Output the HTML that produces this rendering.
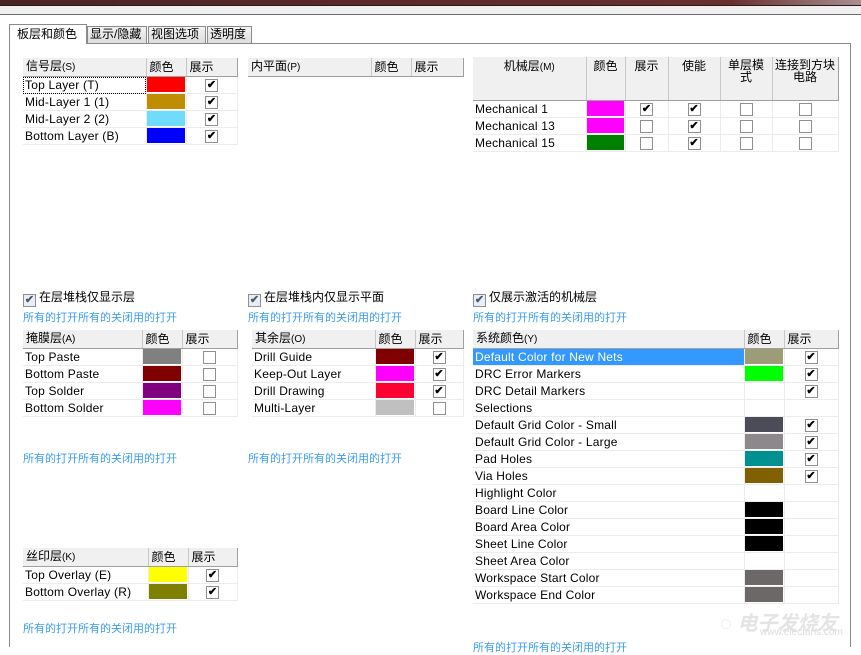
<!DOCTYPE html>
<html><head><meta charset="utf-8">
<style>
*{margin:0;padding:0;box-sizing:border-box}
body{width:861px;height:647px;overflow:hidden;background:#fff;position:relative;font-family:"Liberation Sans","Noto Sans CJK SC",sans-serif;font-size:12px;color:#000}
.a{position:absolute}
table{position:absolute;border-collapse:collapse;table-layout:fixed}
td{height:17px;border-right:1px solid #ececec;border-bottom:1px solid #ececec;padding:0 2px;white-space:nowrap;overflow:hidden;line-height:16px;font-size:12px;letter-spacing:0.2px}
th{height:17px;background:#f0f0f0;border-right:1px solid #c8c8c8;border-bottom:1px solid #a0a0a0;font-weight:normal;text-align:left;padding:0 3px;line-height:16px;font-size:12px;white-space:nowrap}
th:last-child{border-right:1px solid #a0a0a0}
td.c{padding:0;position:relative}
td.c div{position:absolute;left:0;right:1px;top:0;bottom:1px}
td.k{text-align:center;padding:0}
.cb{display:inline-block;width:13px;height:13px;border:1px solid #8f8f8f;background:#fff;vertical-align:middle;font-size:11px;line-height:11px;text-align:center;font-weight:bold;letter-spacing:0}
.sel td:first-child{background:#3399ff;color:#fff}
.lnk{position:absolute;color:#3c9cf0;font-size:11px}
.chk{position:absolute;font-size:12px}
.chk .cb{background:#e8eef8;border-color:#8f8f8f;color:#556;margin-right:3px;vertical-align:-2px}
.tab{position:absolute;top:26px;height:17px;border:1px solid #8a8a8a;border-bottom:none;background:linear-gradient(#f4f4f4,#dcdcdc);font-size:12px;line-height:15px;padding:0 2px}
</style></head><body>
<div class="a" style="left:0;top:0;width:861px;height:5px;background:linear-gradient(90deg,#4a2424,#5e2a2a 50%,#6a3030 85%,#a89090)"></div>
<div class="a" style="left:0;top:5px;width:861px;height:1px;background:#2a1a14"></div>
<div class="a" style="left:0;top:6px;width:861px;height:8px;background:#f0f0f0"></div>
<div class="a" style="left:0;top:14px;width:861px;height:1px;background:#6a6a6a"></div>

<div class="a" style="left:9px;top:43px;width:842px;height:1px;background:#8a8a8a"></div>
<div class="a" style="left:9px;top:43px;width:1px;height:604px;background:#8a8a8a"></div>
<div class="a" style="left:850px;top:43px;width:1px;height:604px;background:#8a8a8a"></div>
<div class="tab" style="left:9px;top:24px;height:20px;width:78px;background:#fff;line-height:19px;padding-left:7px">板层和颜色</div>
<div class="tab" style="left:87px;width:60px">显示/隐藏</div>
<div class="tab" style="left:148px;width:58px">视图选项</div>
<div class="tab" style="left:207px;width:45px">透明度</div>

<table style="left:23px;top:58px;width:214px">
<colgroup><col style="width:123px"><col style="width:40px"><col style="width:51px"></colgroup>
<tr><th>信号层<span style="font-size:10px">(S)</span></th><th>颜色</th><th>展示</th></tr>
<tr><td style="outline:1px dotted #000;outline-offset:-1px">Top Layer (T)</td><td class="c"><div style="background:#f00"></div></td><td class="k"><span class="cb">✔</span></td></tr>
<tr><td>Mid-Layer 1 (1)</td><td class="c"><div style="background:#c08c00"></div></td><td class="k"><span class="cb">✔</span></td></tr>
<tr><td>Mid-Layer 2 (2)</td><td class="c"><div style="background:#70dcfc"></div></td><td class="k"><span class="cb">✔</span></td></tr>
<tr><td>Bottom Layer (B)</td><td class="c"><div style="background:#00f"></div></td><td class="k"><span class="cb">✔</span></td></tr>
</table>

<table style="left:248px;top:58px;width:215px">
<colgroup><col style="width:123px"><col style="width:40px"><col style="width:52px"></colgroup>
<tr><th>内平面<span style="font-size:10px">(P)</span></th><th>颜色</th><th>展示</th></tr>
</table>

<table style="left:473px;top:57px;width:365px">
<colgroup><col style="width:113px"><col style="width:39px"><col style="width:43px"><col style="width:52px"><col style="width:52px"><col style="width:66px"></colgroup>
<tr><th style="height:43px;vertical-align:top;text-align:center;line-height:14px;padding-top:2px">机械层<span style="font-size:10px">(M)</span></th><th style="vertical-align:top;text-align:center;line-height:14px;padding-top:2px">颜色</th><th style="vertical-align:top;text-align:center;line-height:14px;padding-top:2px">展示</th><th style="vertical-align:top;text-align:center;line-height:14px;padding-top:2px">使能</th><th style="vertical-align:top;text-align:center;line-height:12px;padding-top:2px;white-space:normal">单层模式</th><th style="vertical-align:top;text-align:center;line-height:12px;padding-top:2px;white-space:normal;padding:2px 1px 0">连接到方块电路</th></tr>
<tr><td>Mechanical 1</td><td class="c"><div style="background:#f0f"></div></td><td class="k"><span class="cb">✔</span></td><td class="k"><span class="cb">✔</span></td><td class="k"><span class="cb"></span></td><td class="k"><span class="cb"></span></td></tr>
<tr><td>Mechanical 13</td><td class="c"><div style="background:#f0f"></div></td><td class="k"><span class="cb"></span></td><td class="k"><span class="cb">✔</span></td><td class="k"><span class="cb"></span></td><td class="k"><span class="cb"></span></td></tr>
<tr><td>Mechanical 15</td><td class="c"><div style="background:#008000"></div></td><td class="k"><span class="cb"></span></td><td class="k"><span class="cb">✔</span></td><td class="k"><span class="cb"></span></td><td class="k"><span class="cb"></span></td></tr>
</table>

<div class="chk" style="left:23px;top:288px"><span class="cb">✔</span>在层堆栈仅显示层</div>
<div class="chk" style="left:248px;top:288px"><span class="cb">✔</span>在层堆栈内仅显示平面</div>
<div class="chk" style="left:473px;top:288px"><span class="cb">✔</span>仅展示激活的机械层</div>
<div class="lnk" style="left:23px;top:309px">所有的打开所有的关闭用的打开</div>
<div class="lnk" style="left:248px;top:309px">所有的打开所有的关闭用的打开</div>
<div class="lnk" style="left:473px;top:309px">所有的打开所有的关闭用的打开</div>

<table style="left:23px;top:330px;width:214px">
<colgroup><col style="width:119px"><col style="width:40px"><col style="width:55px"></colgroup>
<tr><th>掩膜层<span style="font-size:10px">(A)</span></th><th>颜色</th><th>展示</th></tr>
<tr><td>Top Paste</td><td class="c"><div style="background:#808080"></div></td><td class="k"><span class="cb"></span></td></tr>
<tr><td>Bottom Paste</td><td class="c"><div style="background:#800000"></div></td><td class="k"><span class="cb"></span></td></tr>
<tr><td>Top Solder</td><td class="c"><div style="background:#800080"></div></td><td class="k"><span class="cb"></span></td></tr>
<tr><td>Bottom Solder</td><td class="c"><div style="background:#f0f"></div></td><td class="k"><span class="cb"></span></td></tr>
</table>

<table style="left:252px;top:330px;width:211px">
<colgroup><col style="width:123px"><col style="width:40px"><col style="width:48px"></colgroup>
<tr><th>其余层<span style="font-size:10px">(O)</span></th><th>颜色</th><th>展示</th></tr>
<tr><td>Drill Guide</td><td class="c"><div style="background:#800000"></div></td><td class="k"><span class="cb">✔</span></td></tr>
<tr><td>Keep-Out Layer</td><td class="c"><div style="background:#f0f"></div></td><td class="k"><span class="cb">✔</span></td></tr>
<tr><td>Drill Drawing</td><td class="c"><div style="background:#ff0030"></div></td><td class="k"><span class="cb">✔</span></td></tr>
<tr><td>Multi-Layer</td><td class="c"><div style="background:#c0c0c0"></div></td><td class="k"><span class="cb"></span></td></tr>
</table>

<table style="left:473px;top:330px;width:365px">
<colgroup><col style="width:271px"><col style="width:40px"><col style="width:54px"></colgroup>
<tr><th>系统颜色<span style="font-size:10px">(Y)</span></th><th>颜色</th><th>展示</th></tr>
<tr class="sel"><td>Default Color for New Nets</td><td class="c"><div style="background:#9c9c78"></div></td><td class="k"><span class="cb">✔</span></td></tr>
<tr><td>DRC Error Markers</td><td class="c"><div style="background:#00ff00"></div></td><td class="k"><span class="cb">✔</span></td></tr>
<tr><td>DRC Detail Markers</td><td class="c"></td><td class="k"><span class="cb">✔</span></td></tr>
<tr><td>Selections</td><td class="c"></td><td class="k"></td></tr>
<tr><td>Default Grid Color - Small</td><td class="c"><div style="background:#4c4c58"></div></td><td class="k"><span class="cb">✔</span></td></tr>
<tr><td>Default Grid Color - Large</td><td class="c"><div style="background:#8c888c"></div></td><td class="k"><span class="cb">✔</span></td></tr>
<tr><td>Pad Holes</td><td class="c"><div style="background:#009090"></div></td><td class="k"><span class="cb">✔</span></td></tr>
<tr><td>Via Holes</td><td class="c"><div style="background:#806000"></div></td><td class="k"><span class="cb">✔</span></td></tr>
<tr><td>Highlight Color</td><td class="c"></td><td class="k"></td></tr>
<tr><td>Board Line Color</td><td class="c"><div style="background:#000"></div></td><td class="k"></td></tr>
<tr><td>Board Area Color</td><td class="c"><div style="background:#000"></div></td><td class="k"></td></tr>
<tr><td>Sheet Line Color</td><td class="c"><div style="background:#000"></div></td><td class="k"></td></tr>
<tr><td>Sheet Area Color</td><td class="c"></td><td class="k"></td></tr>
<tr><td>Workspace Start Color</td><td class="c"><div style="background:#6c6868"></div></td><td class="k"></td></tr>
<tr><td>Workspace End Color</td><td class="c"><div style="background:#6c6868"></div></td><td class="k"></td></tr>
</table>

<div class="lnk" style="left:23px;top:450px">所有的打开所有的关闭用的打开</div>
<div class="lnk" style="left:248px;top:450px">所有的打开所有的关闭用的打开</div>

<table style="left:23px;top:548px;width:214px">
<colgroup><col style="width:125px"><col style="width:40px"><col style="width:49px"></colgroup>
<tr><th>丝印层<span style="font-size:10px">(K)</span></th><th>颜色</th><th>展示</th></tr>
<tr><td>Top Overlay (E)</td><td class="c"><div style="background:#ff0"></div></td><td class="k"><span class="cb">✔</span></td></tr>
<tr><td>Bottom Overlay (R)</td><td class="c"><div style="background:#808000"></div></td><td class="k"><span class="cb">✔</span></td></tr>
</table>
<div class="lnk" style="left:23px;top:620px">所有的打开所有的关闭用的打开</div>
<div class="lnk" style="left:473px;top:639px">所有的打开所有的关闭用的打开</div>
<div class="a" style="left:720px;top:607px;font-size:20px;color:#e4e4e4;font-style:italic;font-weight:bold">◌ 电子发烧友</div>
<div class="a" style="left:760px;top:627px;font-size:10px;color:#dcdcdc">www.elecfans.com</div>
</body></html>
